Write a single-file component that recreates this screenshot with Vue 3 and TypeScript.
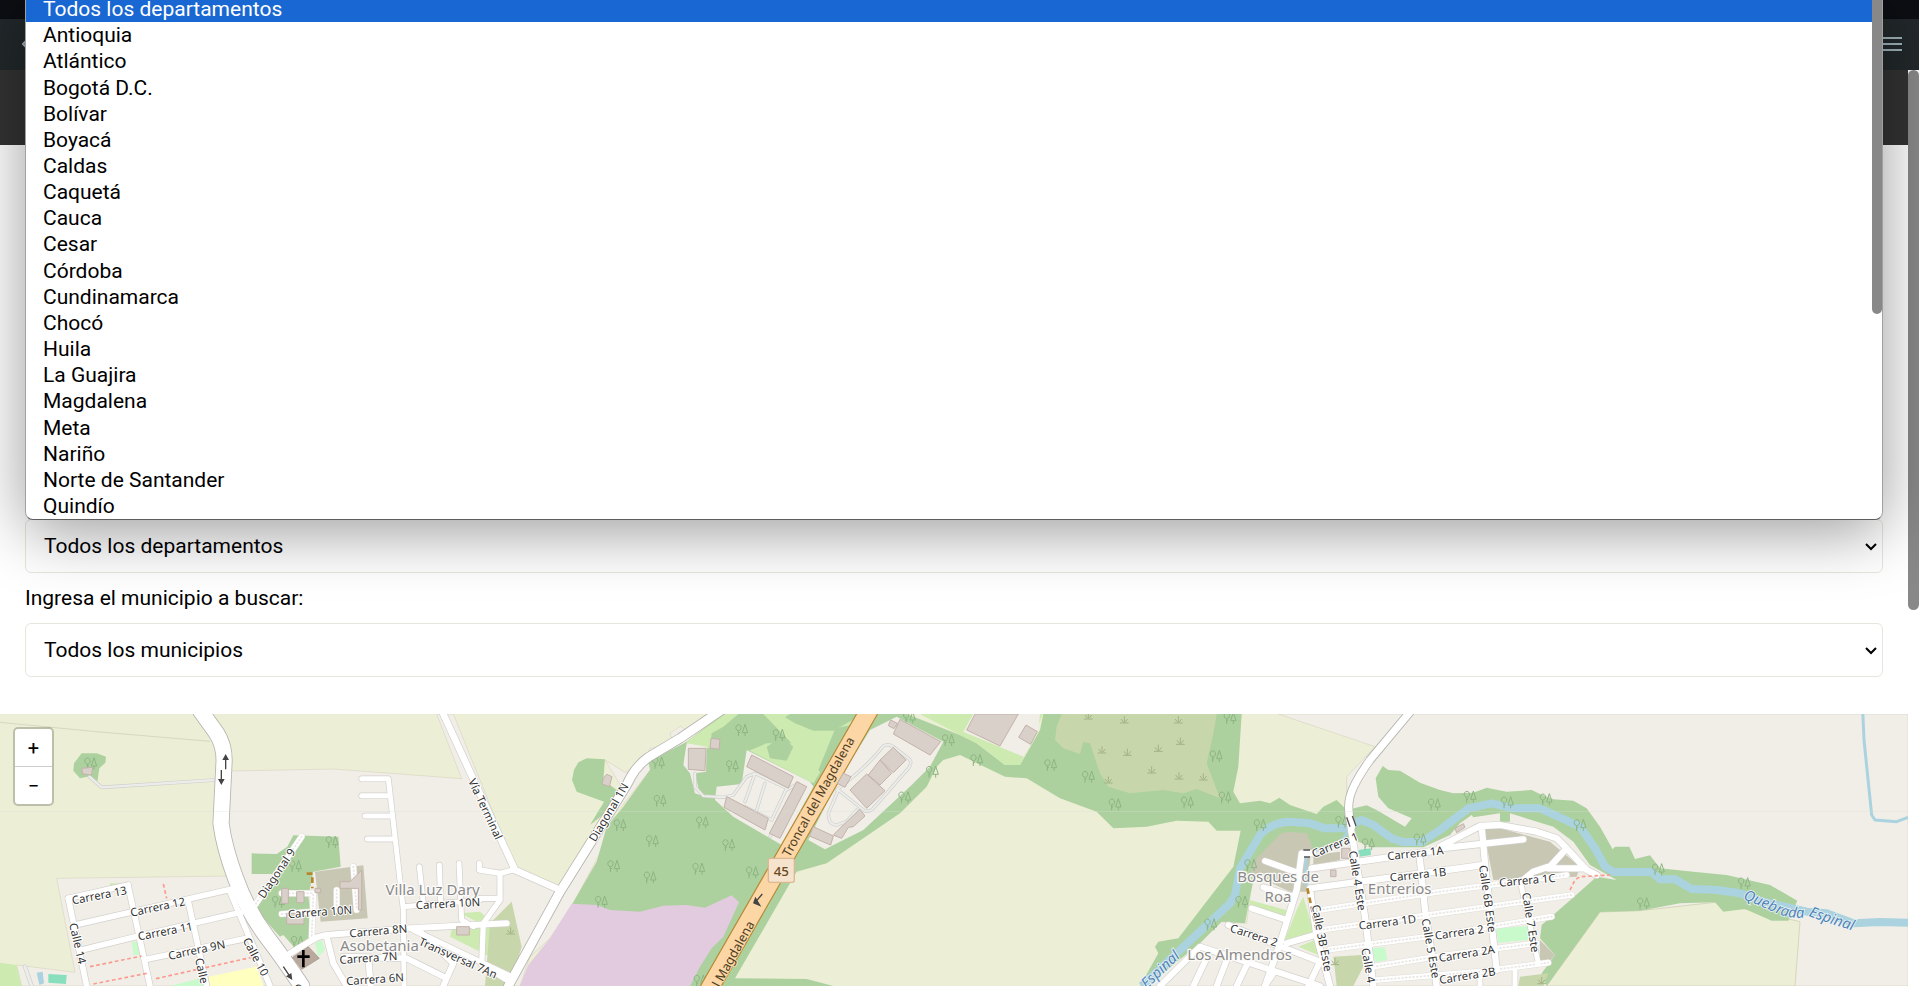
<script setup lang="ts">
import { ref } from 'vue'

interface Label { t: string; x: number; y: number; r: number; s?: number }
interface Road { d: string; w: number }

const departments: string[] = [
  'Todos los departamentos', 'Antioquia', 'Atlántico', 'Bogotá D.C.', 'Bolívar', 'Boyacá', 'Caldas',
  'Caquetá', 'Cauca', 'Cesar', 'Córdoba', 'Cundinamarca', 'Chocó', 'Huila', 'La Guajira', 'Magdalena',
  'Meta', 'Nariño', 'Norte de Santander', 'Quindío',
]
const department = ref(departments[0])
const town = ref('Todos los municipios')

const farmland: string[] = [
  'M4640 828L4800 606L4920 602L5145 577L5235 597L5400 635L5385 828Z',
]
const residential: string[] = [
  'M170 505L690 498L640 330L650 185L700 183L1000 177L1385 206L1310 12L1360 12L1545 470L1690 540L1870 240L1815 150L1877 188L1940 140L1950 115L1965 112L1990 110L2015 85L2010 70L2042 48L2056 60L2120 12L2170 12L1990 150L1950 180L1865 290L1845 310L1805 420L1720 580L1650 685L1590 740L1560 828L65 828L50 765L225 787Z',
  'M3835 12H5724V828H3440L3665 635L3740 640L3760 480L3900 380L4040 320V200L4125 110Z',
]
const forest: string[] = [
  'M245 130L290 130L318 140L316 158L298 175L292 215L262 200L240 205L220 182L222 160Z',
  'M755 430L830 432L862 410L880 376L1015 380L1022 470L940 485L925 560L945 690L885 715L850 675L840 680L760 590L800 540L820 492L755 492Z',
  'M1760 145L1815 148L1810 210L1850 240L1840 290L1770 345L1812 275L1730 245L1716 210L1722 180L1735 157Z',
  'M1715 585L1790 455L1820 350L1870 290L1950 180L1945 155L2060 95L2170 12H2580L2110 828H2070Z',
  'M2600 12H2720L2880 75L2930 100L3015 165H3060L3120 60L3130 12H3725L3715 170L3700 245L3720 280L3780 272L3810 280L3838 263L3870 285L3950 312L3970 290L4010 270L4040 300L4100 286L4130 300L4215 350L4235 325L4165 295L4135 260L4127 205L4148 168L4165 180L4200 182L4260 218L4320 240L4360 250L4420 248L4460 233L4520 245L4595 240L4620 252L4660 268L4720 272L4760 295L4800 350L4838 418L4845 410L4888 410L4905 447L4950 436L4980 475L5080 485L5180 495L5310 525L5392 572L5365 632H5315L5235 597L5170 605L5145 577L5040 580L4920 602L4800 606L4640 828L4625 790L4665 735L4620 685L4625 645L4700 580L4790 500L4850 510L4770 465L4720 395L4660 350L4530 310L4530 335L4500 335L4500 310L4420 322L4415 315L4380 340L4350 375L4270 412H4120L4060 390L4030 395L3930 420L3860 450L3775 440L3750 560L3735 640L3665 635L3600 700L3440 828H3420L3475 730L3465 710L3475 695L3535 685L3600 600L3700 470L3722 362L3650 362L3625 335L3530 332L3440 350L3340 355L3290 305L3180 265L3080 205L3015 200L2880 135L2830 150L2810 170L2780 230L2700 310L2590 385L2480 460L2390 485L2205 805L2420 807L2500 828H2110Z',
]
const grass: string[] = [
  'M0 758L50 765L65 828H0Z',
  'M2060 95L2175 12H2570L2440 220L2245 120L2140 110L2070 130Z',
  'M2760 12H3130L3060 165H3015L2930 100L2880 75Z',
  'M330 520L385 520L375 545L330 535Z',
  'M1380 610L1440 605L1480 640L1470 740L1350 680L1360 640L1440 640Z',
  'M3750 570L3875 605L3870 625L3745 595Z',
  'M3910 560L3945 680L3850 700L3890 600ZM3895 710L3945 690L3955 735Z',
]
const grove: string[] = [
  'M2135 70L2170 50L2215 12H2290L2375 100L2300 100L2240 125L2230 200L2200 225L2120 250L2090 220L2080 130L2130 118Z',
  'M2355 22L2370 12H2590L2500 62H2440L2385 40Z',
  'M2300 110L2345 80L2380 110L2360 152L2310 145Z',
  'M2506 55L2580 40L2475 200L2455 180Z',
]
const scrub: string[] = [
  'M3185 12H3650L3640 70L3620 160L3660 265L3590 237L3550 250L3490 240L3390 250L3325 230L3300 190L3270 100L3250 95L3240 132L3190 115L3165 90L3170 50Z',
  'M1535 575L1565 710L1530 828H1455L1470 640Z',
  'M4000 740L4085 735L4090 770L4060 828H4010ZM4560 800L4645 790L4630 828H4555Z',
]
const brown: string[] = [
  'M945 485L1090 466L1103 625L962 635Z',
  'M3750 490L3765 450L3840 372L3860 365L3920 370L3935 405L3920 545L3870 545Z',
  'M4450 355L4500 355L4650 395L4740 470L4730 500L4480 510Z',
  'M4620 690L4665 735L4640 765L4620 755ZM3940 435L4020 425V450L3940 465Z',
]
const yards: string[] = [
  'M2240 120L2430 215L2440 230L2345 405L2200 320L2145 270L2150 230L2225 222Z',
  'M2690 20L2830 95L2790 170L2735 225L2590 360L2475 418L2425 390L2510 220L2610 60Z',
  'M2890 65L2920 12H3120L3115 60L3070 140Z',
  'M2060 100L2120 110L2118 185L2085 190L2100 255L2085 250L2070 190L2050 165Z',
]
const mint: string[] = [
  'M4490 655L4585 648L4590 690L4495 698Z', 'M4118 715L4155 712L4162 750L4125 757Z',
  'M395 695L418 695L420 735L400 735Z', 'M945 700L965 690L975 720L955 740Z', 'M510 828L620 800L625 828Z',
]
const buildings: string[] = [
  'M2065 115H2118L2115 182L2065 178ZM2133 85L2160 88L2157 118L2130 114Z',
  'M2255 135L2380 200L2365 235L2240 170ZM2180 260L2305 325L2295 360L2172 292Z',
  'M2390 215L2420 230L2340 385L2308 370Z',
  'M2700 28L2822 95L2790 135L2680 72ZM2672 30L2692 40L2682 56L2665 47Z',
  'M2550 240L2600 192L2655 242L2600 295ZM2605 195L2640 150L2675 190L2640 225ZM2640 150L2680 112L2718 150L2680 188Z',
  'M2530 190L2553 200L2535 232L2512 220ZM2500 375L2530 345L2580 298L2595 318L2560 350L2545 352L2525 385Z',
  'M2440 350L2500 378L2492 405L2428 378Z',
  'M2925 12H3055L3000 108L2900 60ZM3078 45L3112 65L3092 103L3056 82Z',
  'M245 175L278 172L275 195L248 192ZM1810 205L1820 193L1836 200L1828 230L1806 222Z',
  'M4365 355L4390 341L4395 352L4370 368Z',
  'M845 535H865V580H845ZM890 545H912V578H890ZM945 535H962V548H945ZM1020 515H1050L1085 480V600H1075V535H1020ZM860 610H912V642H860Z',
  'M1370 650H1408V675H1370ZM3992 480H4008V500H3992ZM4025 415H4050V445H4025Z',
]

const lanes: Road[] = [
  { d: 'M268 200L305 232L645 210', w: 7 }, { d: 'M75 770L95 828', w: 9 },
  { d: 'M2085 190V230L2110 258L2170 262L2200 255L2240 200L2265 190L2360 235L2315 330L2235 290M2265 190L2235 275M2360 240L2395 220M2295 220L2270 300M2395 225L2310 380', w: 6 },
  { d: 'M2510 240Q2600 170 2640 120Q2655 95 2680 110L2725 145Q2740 155 2725 175L2620 295Q2605 310 2590 300L2515 240L2485 310Q2485 345 2510 345L2540 335L2570 300', w: 6 },
]
const streets: Road[] = [
  { d: 'M205 565L260 828M385 530L450 828M565 575L620 828M690 545L810 828', w: 17 },
  { d: 'M205 565L385 525M225 645L705 535M245 720L400 682M400 682L730 605M440 748L740 685', w: 17 },
  { d: 'M1085 206H1165L1210 600L1212 828M1085 257H1170M1095 318H1178M1102 387H1185M1210 590L1440 570M1258 470L1270 580M1318 465L1322 575M1377 460L1385 630L1420 650M1438 460V480', w: 15 },
  { d: 'M870 730L950 682L980 675L1230 655L1520 640M980 680L1000 760L1040 828M1030 740L1200 745M1105 745L1112 828M1220 745L1340 805L1360 760L1260 665M1340 805L1330 828', w: 18 },
  { d: 'M1240 660L1535 800', w: 16 },
  { d: 'M1330 12L1545 480M1545 480L1680 540', w: 20 },
  { d: 'M1440 480L1500 490L1540 480M1440 565H1500V490M1500 570L1450 640L1445 765L1520 810', w: 16 },
  { d: 'M3795 453L3890 487M3790 532L3880 560M3755 595L3860 630M3685 645L3830 705L3960 755M3480 828L3600 710L3960 828M3622 740L3580 828M3680 750L3650 828M3740 765L3710 828M3820 790L3795 828M3960 755L3925 828', w: 18 },
  { d: 'M3940 430H3905L3890 540L3840 700L3795 828M3860 700L3945 675M3935 475L4320 420M3930 535L4340 480', w: 19 },
  { d: 'M3930 540L3950 680L3990 828M4050 340L4065 430L4095 620L4120 828M4260 450L4275 600L4310 828', w: 19 },
  { d: 'M4320 410L4440 348L4500 345L4610 365L4670 385L4700 415L4760 480L4790 495M4320 415L4570 388M4445 350L4455 460L4490 780M4700 415L4645 475L4750 475M4645 470L4600 485L4570 510M4340 480L4450 465', w: 19 },
  { d: 'M4560 510L4615 760M4545 780V828M4440 800V828', w: 15 },
]
const dirt: string[] = [
  'M905 380L765 585', 'M845 550H940L935 680M845 612L940 605M1060 470L1070 600M1010 540V600',
  'M3960 600L4320 545L4700 495', 'M3960 660L4320 610L4715 555', 'M3990 718L4320 675L4655 620',
  'M4120 770L4340 735L4610 700', 'M4130 810L4440 785L4645 758',
]
const trunks: Road[] = [
  { d: 'M600 0L650 70Q675 110 672 160L663 340Q672 410 705 500Q740 600 800 680Q850 745 905 828', w: 46 },
  { d: 'M2165 0L2040 85L1945 142Q1905 170 1880 225L1680 545L1525 828', w: 26 },
  { d: 'M4235 0L4110 150Q4060 220 4050 260Q4040 300 4055 350', w: 22 },
]

const trees: [number, number][] = [
  [272, 160], [996, 396], [886, 468], [835, 575], [892, 695], [2225, 60], [2337, 75], [2197, 168], [1975, 158], [1980, 272],
  [1860, 345], [2107, 337], [1957, 393], [2186, 405], [1841, 468], [2096, 476], [1950, 502], [2257, 487], [1804, 575],
  [2728, 22], [2845, 90], [2797, 185], [2714, 262], [2930, 150], [3152, 165], [3265, 200], [3345, 283], [3562, 277], [3648, 138],
  [3690, 24], [3675, 262], [3780, 345], [4025, 335], [3725, 575], [3632, 643], [4105, 402], [4260, 388], [4303, 283], [4522, 277],
  [4410, 260], [4638, 268], [4740, 345], [4975, 478], [5233, 520], [4930, 580], [3752, 465], [2100, 812],
]
const tufts: [number, number][] = [
  [3265, 18], [3373, 30], [3535, 30], [3306, 120], [3382, 127], [3475, 115], [3541, 94], [3455, 180], [3537, 198], [3610, 201],
  [3325, 210], [1532, 663], [4005, 755], [4625, 812],
]

const streetLabels: Label[] = [
  { t: 'Carrera 13', x: 298, y: 556, r: -11 }, { t: 'Carrera 12', x: 473, y: 591, r: -12 }, { t: 'Carrera 11', x: 496, y: 664, r: -11 },
  { t: 'Carrera 9N', x: 590, y: 720, r: -12 }, { t: 'Calle 14', x: 233, y: 700, r: 77 }, { t: 'Calle', x: 605, y: 782, r: 77 },
  { t: 'Calle 10', x: 767, y: 740, r: 62 }, { t: 'Diagonal 9', x: 830, y: 490, r: -56 }, { t: 'Carrera 10N', x: 960, y: 606, r: -4 },
  { t: 'Carrera 10N', x: 1344, y: 581, r: -3 }, { t: 'Carrera 8N', x: 1135, y: 663, r: -5 }, { t: 'Carrera 7N', x: 1105, y: 744, r: -4 },
  { t: 'Carrera 6N', x: 1125, y: 808, r: -4 }, { t: 'Transversal 7An', x: 1374, y: 744, r: 24 }, { t: 'Vía Terminal', x: 1456, y: 297, r: 65 },
  { t: 'Diagonal 1N', x: 1826, y: 307, r: -59 }, { t: 'Carrera 1', x: 4005, y: 405, r: -22 }, { t: 'Carrera 1A', x: 4246, y: 430, r: -6 },
  { t: 'Carrera 1B', x: 4254, y: 494, r: -6 }, { t: 'Carrera 1C', x: 4582, y: 511, r: -5 }, { t: 'Carrera 1D', x: 4162, y: 637, r: -7 },
  { t: 'Carrera 2', x: 3762, y: 676, r: 18 }, { t: 'Carrera 2', x: 4378, y: 667, r: -8 }, { t: 'Carrera 2A', x: 4400, y: 731, r: -9 },
  { t: 'Carrera 2B', x: 4402, y: 797, r: -9 }, { t: 'Calle 3B Este', x: 3966, y: 684, r: 79 }, { t: 'Calle 4 Este', x: 4072, y: 512, r: 81 },
  { t: 'Calle 4', x: 4105, y: 766, r: 80 }, { t: 'Calle 5 Este', x: 4292, y: 715, r: 80 }, { t: 'Calle 6B Este', x: 4463, y: 566, r: 82 },
  { t: 'Calle 7 Este', x: 4592, y: 637, r: 81 }, { t: 'C', x: 893, y: 834, r: 50 },
]
const trunkLabels: Label[] = [
  { t: 'Troncal del Magdalena', x: 2455, y: 260, r: -61 }, { t: 'Troncal del Magdalena', x: 2155, y: 812, r: -61 },
]
const places: Label[] = [
  { t: 'Villa Luz Dary', x: 1298, y: 538, r: 0 }, { t: 'Asobetania', x: 1138, y: 707, r: 0 }, { t: 'Bosques de', x: 3834, y: 500, r: 0 },
  { t: 'Roa', x: 3834, y: 559, r: 0 }, { t: 'Entrerios', x: 4199, y: 537, r: 0 }, { t: 'Los Almendros', x: 3719, y: 733, r: 0 },
]
const spin = (l: Label): string => `translate(${l.x} ${l.y}) rotate(${l.r})`
</script>

<template>
  <div class="page">
    <div class="topbar"></div>
    <header class="nav">
      <button class="icon-btn" type="button" aria-label="Volver">
        <svg width="8" height="12" viewBox="0 0 8 12"><path d="M6 1L1 6L6 11" /></svg>
      </button>
      <button class="icon-btn" type="button" aria-label="Menú">
        <svg width="24" height="16" viewBox="0 0 24 16"><path d="M0 2H24M0 8H24M0 14H24" /></svg>
      </button>
    </header>

    <div class="body">
      <main class="content">
        <div class="banner"></div>
        <form class="search" @submit.prevent>
          <div class="field">
            <select v-model="department" class="picker" aria-label="Departamento">
              <option v-for="d in departments" :key="d">{{ d }}</option>
            </select>
            <svg class="chevron" width="12" height="8" viewBox="0 0 12 8"><path d="M1 1L6 6L11 1" /></svg>
            <div class="popup">
              <ul class="options" role="listbox" aria-label="Departamentos">
                <li
                  v-for="d in departments" :key="d" role="option" class="option"
                  :class="{ active: d === department }" :aria-selected="d === department" @click="department = d"
                >{{ d }}</li>
              </ul>
              <div class="popup-thumb"></div>
            </div>
          </div>
          <label class="label" for="town">Ingresa el municipio a buscar:</label>
          <div class="control">
            <select id="town" v-model="town" class="picker">
              <option>Todos los municipios</option>
            </select>
            <svg class="chevron" width="12" height="8" viewBox="0 0 12 8"><path d="M1 1L6 6L11 1" /></svg>
          </div>
        </form>

        <section class="map" aria-label="Mapa">
          <svg class="canvas" viewBox="0 12 5724 816" preserveAspectRatio="xMidYMid slice">
            <defs>
              <symbol id="tree" viewBox="-20 -20 40 40" overflow="visible">
                <path d="M-10 18V2M-10 2A8 9 0 1 1 -9 2M-10 10L-5 6M10 18V8M10 -17L2 8H18Z" />
              </symbol>
              <symbol id="tuft" viewBox="-14 -14 28 28" overflow="visible">
                <path d="M-13 9H13M0 8V-11M-2 7L-10 -3M2 7L10 -3" />
              </symbol>
              <path id="creek-name" d="M5228 566Q5290 592 5345 616Q5385 629 5430 619Q5480 639 5600 674" />
              <path id="creek-name-b" d="M3395 880L3585 700" />
            </defs>
            <rect y="0" width="5724" height="830" fill="#ecefd5" />
            <path v-for="d in residential" :key="d" :d="d" fill="#f1eee8" stroke="#d9d5c3" stroke-width="2" />
            <path v-for="d in farmland" :key="d" :d="d" fill="#ecefd5" stroke="#d5d6bb" stroke-width="3" />
            <path d="M0 37L300 66L630 94" class="fence" />
            <path v-for="d in forest" :key="d" :d="d" fill="#add19e" />
            <path v-for="d in grass" :key="d" :d="d" fill="#cdebb0" />
            <path v-for="d in grove" :key="d" :d="d" fill="#add19e" />
            <path v-for="d in scrub" :key="d" :d="d" fill="#c8d7ab" />
            <path v-for="d in brown" :key="d" :d="d" fill="#c7c7b4" />
            <path v-for="d in yards" :key="d" :d="d" fill="#f1eee8" />
            <path v-for="d in mint" :key="d" :d="d" fill="#c8facc" />
            <path d="M1715 581L1790 585L1830 600L1920 605L1990 587L2060 585L2115 593L2195 556L2217 577L2170 680L2135 715L2100 770L2070 828H1560L1585 765L1650 685Z" fill="#e2cbde" />
            <path d="M625 800L770 770L790 828H620Z" fill="#ffffc0" />
            <path d="M145 792L200 795L198 822L145 818ZM4075 420L4112 415L4113 435L4080 440Z" fill="#88dfbe" />
            <path d="M110 788L128 785L132 820L118 825Z" fill="#aad3df" />

            <path class="water" stroke-width="24" d="M3425 828L3690 580L3705 555L3720 475L3780 375Q3820 335 3870 335L3930 340L3975 355H4030L4060 340L4085 330L4120 345L4175 385L4210 396H4265L4320 360L4405 295L4475 280L4540 295H4620L4740 350L4785 415L4815 470L4840 486H4955L4980 508H5025L5075 537L5150 540L5220 550L5290 575L5420 605L5480 610L5560 640L5640 636L5724 638" />
            <path class="water" stroke-width="9" d="M5588 0L5592 90L5615 315L5625 330L5690 335L5724 322" />
            <path class="water" stroke-width="9" d="M4050 355L4020 400L3920 430L3915 500L3940 600" />

            <g class="icons tree-icons">
              <use v-for="p in trees" :key="p.join()" href="#tree" :x="p[0] - 20" :y="p[1] - 20" width="40" height="40" />
            </g>
            <g class="icons tuft-icons">
              <use v-for="p in tufts" :key="p.join()" href="#tuft" :x="p[0] - 14" :y="p[1] - 14" width="28" height="28" />
            </g>

            <g class="road">
              <path v-for="r in lanes" :key="r.d" :d="r.d" stroke="#cfcfcb" :stroke-width="r.w + 4" />
              <path v-for="r in lanes" :key="r.d + 'f'" :d="r.d" stroke="#ececea" :stroke-width="r.w" />
              <path v-for="r in streets" :key="r.d" :d="r.d" stroke="#d3d0cc" :stroke-width="r.w + 4" />
              <path v-for="r in trunks" :key="r.d" :d="r.d" stroke="#b5b3ae" :stroke-width="r.w + 5" />
              <path v-for="d in dirt" :key="d" :d="d" stroke="#e0ddd8" stroke-width="20" />
              <path v-for="d in dirt" :key="d + 'f'" :d="d" stroke="#fff" stroke-width="17" />
              <path v-for="d in dirt" :key="d + 'g'" :d="d" stroke="#ebe9e6" stroke-width="6" stroke-dasharray="2 9" />
              <path v-for="r in streets" :key="r.d + 'f'" :d="r.d" stroke="#fff" :stroke-width="r.w" />
              <path v-for="r in trunks" :key="r.d + 'f'" :d="r.d" stroke="#fff" :stroke-width="r.w" />
              <path d="M2608 0L2120 850" stroke="#b58a35" stroke-width="58" />
              <path d="M2608 0L2120 850" stroke="#fcd6a4" stroke-width="51" />
            </g>

            <path class="footway" d="M490 522L500 565M270 770L425 738M280 822L440 790M468 806L755 742M4710 540L4725 510L4740 500L4830 495" />
            <path class="track" d="M920 491H937V535M3922 535L3950 660" />
            <path v-for="d in buildings" :key="d" :d="d" class="building" />
            <path d="M878 742L925 710L958 745L905 778Z" fill="#b9a99c" stroke="#a08f82" stroke-width="2" />
            <path d="M910 720V772M892 740H929" stroke="#000" stroke-width="8" />

            <g class="arrows">
              <path d="M677 178V145M664 180V212M850 770L868 797M2287 552L2270 572" />
              <path class="head" d="M677 132L687 150H667ZM664 225L674 207H654ZM877 810L874 789L858 799ZM2259 580L2284 590L2266 560Z" />
            </g>
            <path d="M4040 322L4050 350M4057 318L4068 348M3910 420H3930M3912 441H3930" stroke="#555" stroke-width="4" />
            <path d="M0 304H5724" stroke="#d7dfd9" stroke-width="2" opacity=".55" />

            <g class="text">
              <text v-for="(l, i) in places" :key="'p' + i" :transform="spin(l)" dy=".35em" class="place">{{ l.t }}</text>
              <text v-for="(l, i) in streetLabels" :key="'s' + i" :transform="spin(l)" dy=".35em" class="street">{{ l.t }}</text>
              <text v-for="(l, i) in trunkLabels" :key="'t' + i" :transform="spin(l)" dy=".35em" class="trunk">{{ l.t }}</text>
            </g>
            <text class="creek"><textPath href="#creek-name">Quebrada Espinal</textPath></text>
            <text class="creek"><textPath href="#creek-name-b">da Espinal</textPath></text>
            <rect x="2305" y="445" width="78" height="72" rx="6" fill="#f6e3cd" stroke="#dcb994" stroke-width="4" />
            <text class="shield" x="2344" y="483" dy=".35em">45</text>
          </svg>
          <div class="zoom">
            <button type="button" aria-label="Acercar">+</button>
            <button type="button" aria-label="Alejar">−</button>
          </div>
        </section>
      </main>
      <div class="scrollbar"><div class="thumb"></div></div>
    </div>
  </div>
</template>

<style>
body { margin: 0; }
</style>

<style scoped>
* { box-sizing: border-box; }
.page {
  display: flex;
  flex-direction: column;
  min-height: 100vh;
  overflow: hidden;
  background: #fff;
  color: #000;
  font: 21px/24px Roboto, "Liberation Sans", sans-serif;
}
.topbar { height: 19px; background: #0d0e13; }
.nav {
  display: flex;
  align-items: center;
  justify-content: space-between;
  height: 51px;
  padding: 0 17px 1px 22px;
  background: #22282b;
}
.icon-btn { display: flex; padding: 0; border: 0; background: none; }
.icon-btn path { fill: none; stroke: #9fb3ba; stroke-width: 2; }
.body { display: flex; flex: 1; }
.content { display: flex; flex: 1; flex-direction: column; min-width: 0; }
.scrollbar { width: 11px; background: #fff; }
.thumb { height: 540px; border-radius: 6px; background: #888; }
.banner { height: 75px; background: #333; }
.search {
  display: flex;
  flex: 1;
  flex-direction: column;
  justify-content: flex-end;
  padding: 0 25px 37px;
}
.field, .control { position: relative; }
.picker {
  display: block;
  width: 100%;
  height: 54px;
  padding: 0 32px 0 18px;
  border: 1px solid #e6e6dc;
  border-radius: 6px;
  background: #fff;
  color: #000;
  font: inherit;
  appearance: none;
}
.chevron {
  position: absolute;
  top: 24px;
  right: 6px;
  fill: none;
  stroke: #000;
  stroke-width: 2;
  pointer-events: none;
}
.label { margin: 13px 0; }
.popup {
  position: absolute;
  right: 0;
  bottom: calc(100% - 1px);
  left: 0;
  z-index: 2;
  height: 525px;
  overflow: hidden;
  border: 1px solid #a0a0a0;
  border-bottom-color: #5c5c5c;
  border-radius: 0 0 8px 8px;
  background: #fff;
}
.field::before {
  content: "";
  position: absolute;
  right: 0;
  bottom: 100%;
  left: 0;
  z-index: 1;
  height: 525px;
  border-radius: 8px;
  box-shadow: 0 12px 64px rgba(0, 0, 0, .4);
}
.options { display: flex; flex-direction: column; height: 100%; margin: 0; padding: 0; list-style: none; }
.option { display: flex; flex: 1; align-items: center; padding: 0 17px; }
.option.active { background: #1967d2; color: #fff; }
.popup-thumb {
  position: absolute;
  top: 0;
  right: 0;
  width: 10px;
  height: 318px;
  border-radius: 0 0 5px 5px;
  background: #888;
}
.map { position: relative; height: 272px; }
.canvas { display: block; width: 100%; height: 100%; }
.zoom {
  position: absolute;
  top: 13px;
  left: 13px;
  display: flex;
  flex-direction: column;
  width: 41px;
  border: 2px solid rgba(0, 0, 0, .2);
  border-radius: 5px;
  background: #fff;
  background-clip: padding-box;
}
.zoom button {
  height: 37px;
  padding: 0;
  border: 0;
  background: none;
  color: #000;
  font: 20px/36px Roboto, sans-serif;
}
.zoom button:first-child { height: 38px; border-bottom: 1px solid #ccc; }
.fence { fill: none; stroke: #d6d8bf; stroke-width: 3; }
.water { fill: none; stroke: #aad3df; stroke-linejoin: round; }
.icons { fill: none; stroke-width: 3; }
.tree-icons { stroke: #8cb483; }
.tuft-icons { stroke: #a3b383; }
.road { fill: none; stroke-linecap: round; stroke-linejoin: round; }
.footway { fill: none; stroke: #fa9a8c; stroke-width: 5; stroke-dasharray: 11 8; }
.track { fill: none; stroke: #b8852c; stroke-width: 8; stroke-dasharray: 17 11; }
.building { fill: #d9d0c9; stroke: #c3b2aa; stroke-width: 3; }
.arrows { fill: none; stroke: #444; stroke-width: 4; }
.arrows .head { fill: #444; stroke: none; }
.text, .shield { text-anchor: middle; font-family: "Noto Sans", sans-serif; }
.street { fill: #333; stroke: #fff; stroke-width: 6; paint-order: stroke; stroke-linejoin: round; font-size: 34px; }
.trunk { fill: #4b3a1d; font-size: 38px; stroke: #fcd6a4; stroke-width: 6; paint-order: stroke; }
.place { fill: #8a8a8a; stroke: #fbfaf8; stroke-width: 8; paint-order: stroke; stroke-linejoin: round; font-size: 45px; }
.creek {
  fill: #5084b8;
  stroke: #e8f2f4;
  stroke-width: 5;
  paint-order: stroke;
  font: italic 44px "Noto Sans", sans-serif;
}
.shield { fill: #6b4a1f; font-size: 40px; font-weight: 500; }
</style>
